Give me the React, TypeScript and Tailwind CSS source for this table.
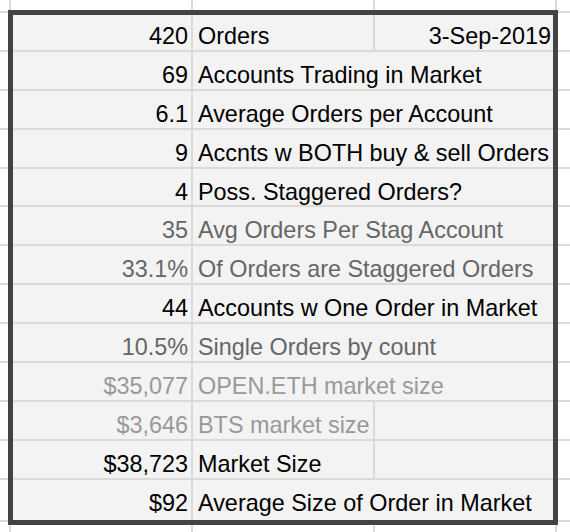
import React from "react";

type Row = { a: string; b: string; c?: string; tone: "k" | "m" | "l"; split?: boolean };

const rows: Row[] = [
  { a: "420", b: "Orders", c: "3-Sep-2019", tone: "k", split: true },
  { a: "69", b: "Accounts Trading in Market", tone: "k" },
  { a: "6.1", b: "Average Orders per Account", tone: "k" },
  { a: "9", b: "Accnts w BOTH buy & sell Orders", tone: "k" },
  { a: "4", b: "Poss. Staggered Orders?", tone: "k" },
  { a: "35", b: "Avg Orders Per Stag Account", tone: "m" },
  { a: "33.1%", b: "Of Orders are Staggered Orders", tone: "m" },
  { a: "44", b: "Accounts w One Order in Market", tone: "k" },
  { a: "10.5%", b: "Single Orders by count", tone: "m" },
  { a: "$35,077", b: "OPEN.ETH market size", tone: "l" },
  { a: "$3,646", b: "BTS market size", tone: "l", split: true, c: "" },
  { a: "$38,723", b: "Market Size", tone: "k", split: true, c: "" },
  { a: "$92", b: "Average Size of Order in Market", tone: "k" },
];

const toneClass = (t: Row["tone"]) =>
  t === "k" ? "text-black" : t === "m" ? "text-[#666666]" : "text-[#999999]";

export default function App() {
  return (
    <div className="relative w-[570px] h-[532px] overflow-hidden bg-white font-['Liberation_Sans',Arial,sans-serif] text-[23.4px] leading-[1.15]">
      <div className="grid h-full w-full gap-[2px] bg-[#dadada] grid-cols-[9px_180px_180px_180px_1fr] grid-rows-[11px_repeat(12,36.9px)_40.2px_1fr]">
        {/* top stub row */}
        <div className="bg-white" />
        <div className="bg-white" />
        <div className="bg-white" />
        <div className="bg-white" />
        <div className="bg-white" />
        {rows.map((r, i) => {
          const last = i === rows.length - 1;
          const cell = `bg-[#f3f3f3] flex items-end overflow-visible whitespace-nowrap ${
            last ? "pb-[2.5px]" : "pb-0"
          } ${toneClass(r.tone)}`;
          return (
            <React.Fragment key={i}>
              <div className="bg-white" />
              <div className={`${cell} justify-end pr-[3px]`}>{r.a}</div>
              {r.split ? (
                <>
                  <div className={`${cell} pl-[5px]`}>{r.b}</div>
                  <div className={`${cell} justify-end pr-[4px]`}>{r.c}</div>
                </>
              ) : (
                <div className={`${cell} col-span-2 pl-[5px]`}>{r.b}</div>
              )}
              <div className="bg-white" />
            </React.Fragment>
          );
        })}
        {/* bottom stub row */}
        <div className="bg-white" />
        <div className="bg-white" />
        <div className="bg-white" />
        <div className="bg-white" />
        <div className="bg-white" />
      </div>
      <div className="pointer-events-none absolute left-[8px] top-[10px] w-[550px] h-[515px] border-[5px] border-[#434343]" />
    </div>
  );
}
